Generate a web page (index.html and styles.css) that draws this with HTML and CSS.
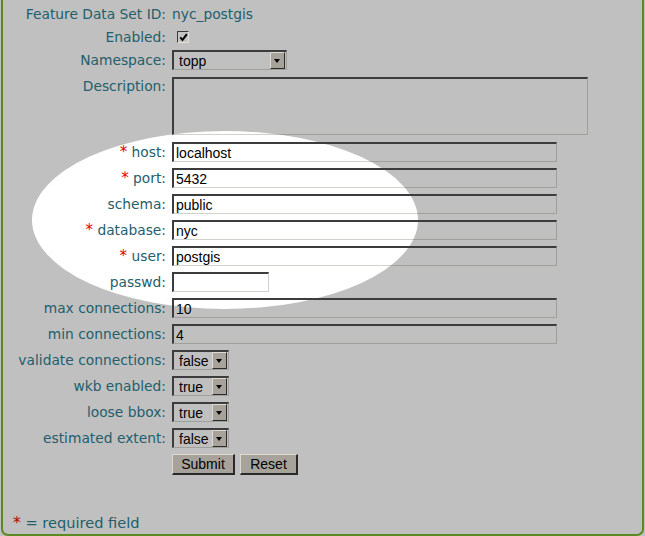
FILE: index.html
```html
<!DOCTYPE html>
<html>
<head>
<meta charset="utf-8">
<link rel="stylesheet" href="styles.css">
</head>
<body>
<div class="frame">
  <div class="spot"></div>
  <div class="form">
    <div class="row tight">
      <span class="label">Feature Data Set ID:</span>
      <span class="value">nyc_postgis</span>
    </div>
    <div class="row tight">
      <span class="label">Enabled:</span>
      <span class="check"><svg width="9" height="9" viewBox="0 0 9 9"><path d="M1.3 4.3 L3.5 6.9 L7.9 1.2" fill="none" stroke="#000" stroke-width="2"/></svg></span>
    </div>
    <div class="row desc-gap">
      <span class="label">Namespace:</span>
      <span class="select w-ns"><span class="sel-text">topp</span><span class="arrow"></span></span>
    </div>
    <div class="row top host-gap">
      <span class="label label-top">Description:</span>
      <span class="textarea"></span>
    </div>
    <div class="row">
      <span class="label"><span class="req">*</span> host:</span>
      <span class="input w-full">localhost</span>
    </div>
    <div class="row">
      <span class="label"><span class="req">*</span> port:</span>
      <span class="input w-full">5432</span>
    </div>
    <div class="row">
      <span class="label">schema:</span>
      <span class="input w-full">public</span>
    </div>
    <div class="row">
      <span class="label"><span class="req">*</span> database:</span>
      <span class="input w-full">nyc</span>
    </div>
    <div class="row">
      <span class="label"><span class="req">*</span> user:</span>
      <span class="input w-full">postgis</span>
    </div>
    <div class="row">
      <span class="label">passwd:</span>
      <span class="input w-pw"></span>
    </div>
    <div class="row">
      <span class="label">max connections:</span>
      <span class="input w-full">10</span>
    </div>
    <div class="row">
      <span class="label">min connections:</span>
      <span class="input w-full">4</span>
    </div>
    <div class="row">
      <span class="label">validate connections:</span>
      <span class="select w-bool"><span class="sel-text">false</span><span class="arrow"></span></span>
    </div>
    <div class="row">
      <span class="label">wkb enabled:</span>
      <span class="select w-bool"><span class="sel-text">true</span><span class="arrow"></span></span>
    </div>
    <div class="row">
      <span class="label">loose bbox:</span>
      <span class="select w-bool"><span class="sel-text">true</span><span class="arrow"></span></span>
    </div>
    <div class="row">
      <span class="label">estimated extent:</span>
      <span class="select w-bool"><span class="sel-text">false</span><span class="arrow"></span></span>
    </div>
    <div class="row">
      <span></span>
      <span class="buttons"><span class="btn btn-submit">Submit</span><span class="btn btn-reset">Reset</span></span>
    </div>
  </div>
  <div class="footer"><span class="req-dark">*</span> = required field</div>
</div>
</body>
</html>
```

FILE: styles.css
```css
html, body {
  margin: 0;
  padding: 0;
  background: #c0c0c0;
}
body {
  width: 645px;
  height: 536px;
  overflow: hidden;
  font-family: "DejaVu Sans", sans-serif;
  font-size: 13.8px;
  color: #235e6c;
}
.frame {
  position: relative;
  box-sizing: border-box;
  margin-left: 1px;
  width: 643px;
  height: 536px;
  border-left: 2px solid #5b8a22;
  border-right: 2px solid #5b8a22;
  border-bottom: 2px solid #5b8a22;
  border-bottom-left-radius: 7px;
  border-bottom-right-radius: 7px;
  display: flex;
  flex-direction: column;
  padding-top: 4px;
}
.spot {
  position: absolute;
  left: 29px;
  top: 131px;
  width: 386px;
  height: 178px;
  border-radius: 50%;
  background: #ffffff;
}
.form {
  position: relative;
  display: flex;
  flex-direction: column;
}
.row {
  display: grid;
  grid-template-columns: 163px auto;
  column-gap: 6px;
  align-items: center;
  min-height: 20px;
  margin-bottom: 6px;
}
.row.tight { margin-bottom: 3px; }
.row.desc-gap { margin-bottom: 7px; }
.row.host-gap { margin-bottom: 7px; }
.row.top { align-items: start; }
.label {
  text-align: right;
  white-space: nowrap;
  line-height: 19px;
}
.label-top { padding-top: 0; }
.value { white-space: nowrap; line-height: 19px; }
.req { color: #e00000; font-size: 15px; }
.req-dark { color: #b40000; font-size: 15.5px; }
.check {
  box-sizing: border-box;
  margin-left: 5px;
  width: 12px;
  height: 12px;
  border-top: 1px solid #3a3a3a;
  border-left: 1px solid #3a3a3a;
  border-right: 1px solid #e4e0d8;
  border-bottom: 1px solid #e4e0d8;
  background: #c4c4c4;
  display: flex;
  align-items: center;
  justify-content: center;
}
.check svg { display: block; }
.input, .textarea, .select {
  box-sizing: border-box;
  height: 20px;
  border-top: 2px solid #3c3c3c;
  border-left: 2px solid #3c3c3c;
  border-right: 1px solid rgba(40, 30, 0, 0.2);
  border-bottom: 1px solid rgba(40, 30, 0, 0.2);
  font-family: "Liberation Sans", Arial, sans-serif;
  font-size: 14px;
  color: #000;
  line-height: 18px;
  padding-left: 2px;
  white-space: nowrap;
}
.w-full { width: 385px; }
.w-pw { width: 97px; }
.textarea {
  width: 416px;
  height: 58px;
}
.select {
  display: flex;
  align-items: stretch;
  justify-content: space-between;
  padding-left: 5px;
  padding-right: 1px;
  font-size: 14px;
}
.w-ns { width: 115px; }
.w-bool { width: 57px; }
.sel-text { line-height: 18px; }
.arrow {
  box-sizing: border-box;
  width: 15px;
  height: 17px;
  background: #a7a39b;
  border-top: 1px solid #dedad2;
  border-left: 1px solid #dedad2;
  border-right: 1px solid #2a2a2a;
  border-bottom: 1px solid #2a2a2a;
  position: relative;
}
.arrow::after {
  content: "";
  position: absolute;
  left: 3px;
  top: 6px;
  border-left: 3.5px solid transparent;
  border-right: 3.5px solid transparent;
  border-top: 4px solid #000;
}
.buttons {
  display: flex;
  gap: 5px;
}
.btn {
  box-sizing: border-box;
  height: 21px;
  background: #a7a39b;
  border-top: 1px solid #dedad2;
  border-left: 1px solid #dedad2;
  border-right: 2px solid #2a2a2a;
  border-bottom: 2px solid #2a2a2a;
  font-family: "Liberation Sans", Arial, sans-serif;
  font-size: 14px;
  color: #000;
  line-height: 19px;
  text-align: center;
}
.btn-submit { width: 63px; }
.btn-reset { width: 58px; }
.footer {
  margin-top: auto;
  padding-left: 10px;
  padding-bottom: 1px;
  line-height: 19px;
  font-size: 14.6px;
}
```
